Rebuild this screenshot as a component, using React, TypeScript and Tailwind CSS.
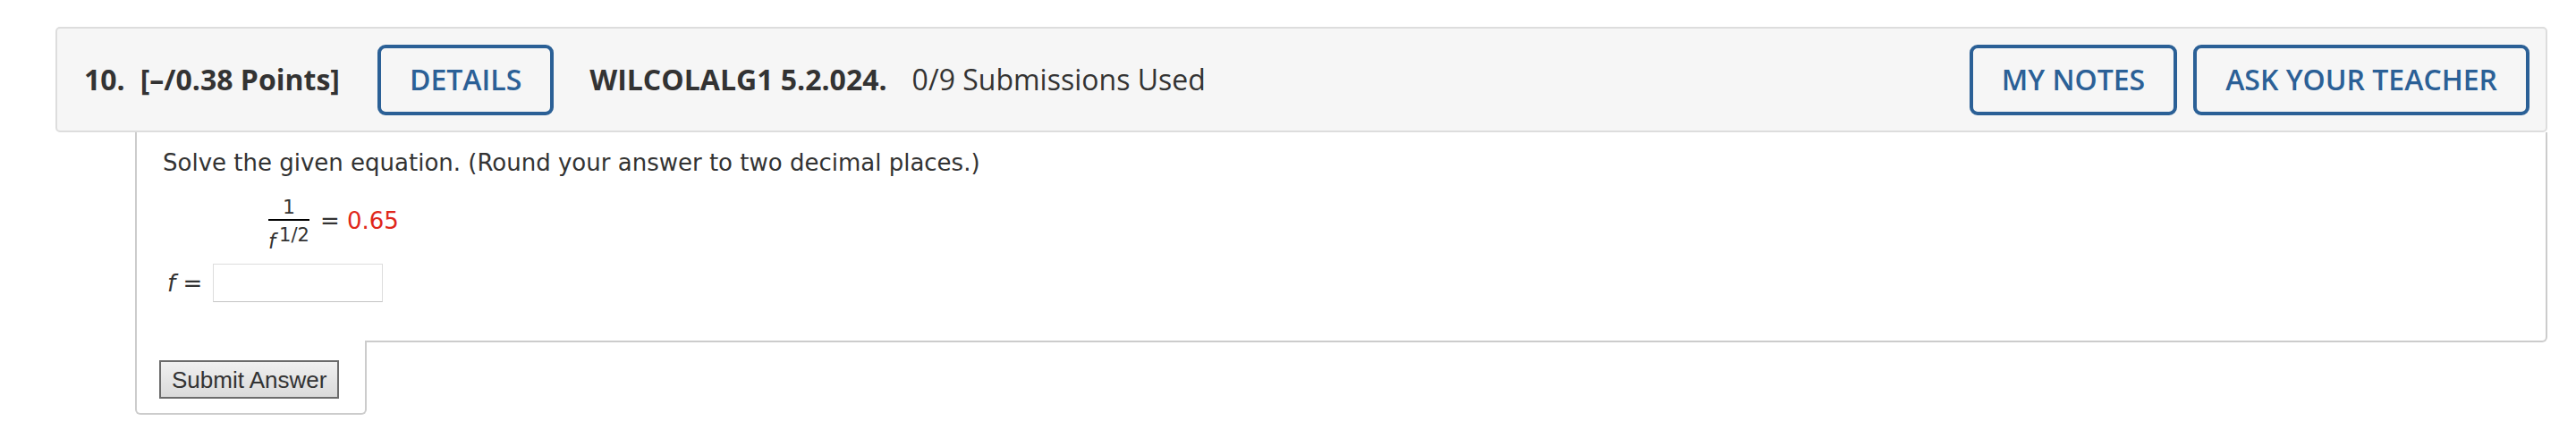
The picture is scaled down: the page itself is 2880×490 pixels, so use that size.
import React, { useState } from 'react';

const headerFont = { fontFamily: '"Open Sans", "Liberation Sans", sans-serif' };

const OutlineButton = ({ label }: { label: string }) => (
    <button
        type="button"
        className="h-[79px] px-[32px] border-4 border-[#2b6096] rounded-[9px] text-[32px] font-semibold text-[#2b6096] leading-none whitespace-nowrap"
    >
        {label}
    </button>
);

const App = () => {
    const [answer, setAnswer] = useState('');

    return (
        <div className="w-[2880px] h-[490px] bg-white pt-[30px]">
            {/* question header */}
            <div
                className="ml-[62px] mr-[32px] h-[118px] flex items-center border-2 border-[#dddddd] rounded-[5px] bg-[#f6f6f6] pl-[30px] pr-[18px] text-[#333333]"
                style={headerFont}
            >
                <span className="text-[32px] font-bold">10.</span>
                <span className="ml-[17px] text-[32px] font-bold">[–/0.38 Points]</span>
                <div className="ml-[42px]">
                    <OutlineButton label="DETAILS" />
                </div>
                <span className="ml-[40px] text-[32px] font-bold">WILCOLALG1 5.2.024.</span>
                <span className="ml-[28px] text-[32px]">0/9 Submissions Used</span>
                <div className="ml-auto flex items-center gap-[18px]">
                    <OutlineButton label="MY NOTES" />
                    <OutlineButton label="ASK YOUR TEACHER" />
                </div>
            </div>

            {/* question body */}
            <div
                className="ml-[151px] mr-[32px] h-[235px] border-x-2 border-b-2 border-[#cccccc] rounded-br-[6px] pl-[29px] pt-[19px] text-[#333333]"
                style={{ fontFamily: '"DejaVu Sans", Verdana, sans-serif' }}
            >
                <p className="text-[26px] leading-[30px]">
                    Solve the given equation. (Round your answer to two decimal places.)
                </p>

                <div className="ml-[110px] mt-[24px] flex items-start">
                    <div className="flex flex-col items-center px-[8px]">
                        <span className="text-[22px] leading-[22px] mb-[2px]">1</span>
                        <span className="block h-[2px] w-full bg-black" />
                        <span className="mt-[9px] h-[28px] text-[23px] leading-[28px] whitespace-nowrap">
                            <i>f</i>
                            <sup className="text-[21px] top-[-8px] ml-[4px]">1/2</sup>
                        </span>
                    </div>
                    <span className="mt-[11px] ml-[4px] text-[26px] leading-[30px] whitespace-nowrap">
                        = <span className="text-[#e0271b]">0.65</span>
                    </span>
                </div>

                <div className="mt-[11px] ml-[5px] flex items-center">
                    <span className="text-[26px] leading-[30px]">
                        <i>f</i> =
                    </span>
                    <input
                        type="text"
                        value={answer}
                        onChange={(e) => setAnswer(e.target.value)}
                        className="ml-[12px] w-[190px] h-[43px] border border-[#dddddd] border-b-[#c4c4c4] bg-white outline-none"
                    />
                </div>
            </div>

            {/* submit tab */}
            <div className="ml-[151px] -mt-[2px] w-[259px] h-[83px] bg-white border-x-2 border-b-2 border-[#cccccc] rounded-b-[6px] pl-[25px] pt-[22px]">
                <button
                    type="submit"
                    className="h-[43px] px-[12px] border-2 border-[#6b6b6b] bg-gradient-to-b from-[#f0f0f0] to-[#dadada] text-[26px] leading-none text-[#333333] whitespace-nowrap"
                    style={{ fontFamily: '"Liberation Sans", Arial, sans-serif' }}
                >
                    Submit Answer
                </button>
            </div>
        </div>
    );
};

export default App;
